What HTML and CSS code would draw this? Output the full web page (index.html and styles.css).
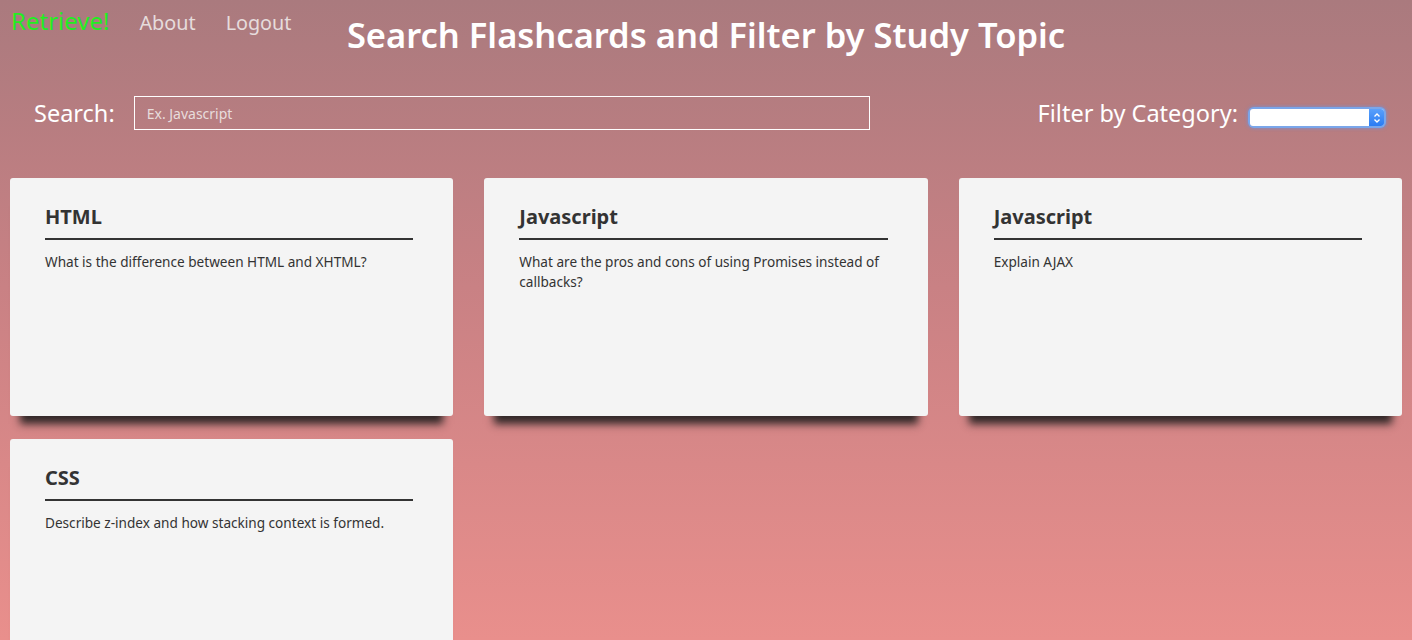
FILE: index.html
```html
<!DOCTYPE html>
<html>
<head>
<meta charset="utf-8">
<link rel="stylesheet" href="styles.css">
</head>
<body>
<header class="header">
  <nav class="nav">
    <a class="brand" href="#">Retrieve!</a>
    <a class="nav-link" href="#">About</a>
    <a class="nav-link" href="#">Logout</a>
  </nav>
  <h1 class="title">Search Flashcards and Filter by Study Topic</h1>
  <div></div>
</header>
<section class="controls">
  <div class="search">
    <label class="label">Search:</label>
    <input class="search-input" type="text" placeholder="Ex. Javascript">
  </div>
  <div class="filter">
    <label class="label">Filter by Category:</label>
    <div class="select-wrap">
      <select class="select"><option></option></select>
      <span class="select-btn">
        <svg width="8" height="12" viewBox="0 0 8 12"><path d="M1.5 4.5 L4 2 L6.5 4.5 M1.5 7.5 L4 10 L6.5 7.5" fill="none" stroke="#fff" stroke-width="1.4"/></svg>
      </span>
    </div>
  </div>
</section>
<main class="cards">
  <article class="card">
    <h2 class="card-title">HTML</h2>
    <p class="card-text">What is the difference between HTML and XHTML?</p>
  </article>
  <article class="card">
    <h2 class="card-title">Javascript</h2>
    <p class="card-text">What are the pros and cons of using Promises instead of callbacks?</p>
  </article>
  <article class="card">
    <h2 class="card-title">Javascript</h2>
    <p class="card-text">Explain AJAX</p>
  </article>
  <article class="card">
    <h2 class="card-title">CSS</h2>
    <p class="card-text">Describe z-index and how stacking context is formed.</p>
  </article>
</main>
</body>
</html>
```
FILE: styles.css
```css
html, body {
  margin: 0;
  height: 100%;
}
body {
  font-family: "Noto Sans", "Open Sans", sans-serif;
  background: linear-gradient(to bottom, #aa7a7e 0%, #c98184 45%, #e98f8c 100%);
  background-attachment: fixed;
  min-height: 640px;
  color: #fff;
  overflow: hidden;
}
.header {
  display: grid;
  grid-template-columns: 1fr auto 1fr;
  align-items: start;
  height: 70px;
}
.nav {
  display: flex;
  align-items: baseline;
  gap: 30px;
  padding: 6px 0 0 11px;
}
.nav a {
  text-decoration: none;
  line-height: 30px;
}
.brand {
  color: #22ee22;
  font-size: 24px;
}
.nav-link {
  color: #e6dcdc;
  font-size: 19.8px;
}
.title {
  margin: 0;
  padding-top: 14px;
  font-size: 34.5px;
  line-height: 42px;
  font-weight: 600;
  color: #fff;
}
.controls {
  display: flex;
  justify-content: space-between;
  align-items: center;
  padding: 26px 28px 0 34px;
  height: 34px;
}
.search, .filter {
  display: flex;
  align-items: center;
}
.label {
  font-size: 23.5px;
  color: #fff;
}
.search .label {
  margin-right: 19px;
}
.search-input {
  box-sizing: border-box;
  width: 736px;
  height: 34px;
  background: transparent;
  border: 1px solid #fff;
  padding: 0 12px;
  font-family: "Noto Sans", sans-serif;
  font-size: 14px;
  color: #fff;
  outline: none;
}
.search-input::placeholder {
  color: #e8dcdc;
}
.filter .label {
  margin-right: 12px;
}
.select-wrap {
  position: relative;
  width: 134px;
  height: 17px;
  margin-top: 9px;
  border-radius: 4px;
  box-shadow: 0 0 0 2px #7aa6ea, 0 0 3px 3px rgba(100,150,240,0.5);
}
.select {
  appearance: none;
  -webkit-appearance: none;
  display: block;
  width: 100%;
  height: 100%;
  border: none;
  border-radius: 3px;
  background: #fff;
  outline: none;
}
.select-btn {
  position: absolute;
  right: 0;
  top: 0;
  width: 15px;
  height: 17px;
  background: linear-gradient(#5aa0fb, #2a7cf3);
  border-radius: 0 3px 3px 0;
  display: flex;
  align-items: center;
  justify-content: center;
}
.cards {
  display: grid;
  grid-template-columns: repeat(3, 1fr);
  column-gap: 31px;
  row-gap: 23px;
  padding: 48px 10px 0 10px;
}
.card {
  box-sizing: border-box;
  height: 238px;
  background: #f4f4f4;
  border-radius: 3px;
  padding: 0 40px 0 35px;
  box-shadow: 0 18px 8px -10px rgba(40,35,35,0.95);
  color: #333;
}
.card-title {
  margin: 0;
  padding: 27px 0 9px;
  font-size: 20px;
  line-height: 24px;
  font-weight: 700;
  border-bottom: 2px solid #333;
}
.card-text {
  margin: 12px 0 0;
  font-size: 13.6px;
  line-height: 20px;
}
```
